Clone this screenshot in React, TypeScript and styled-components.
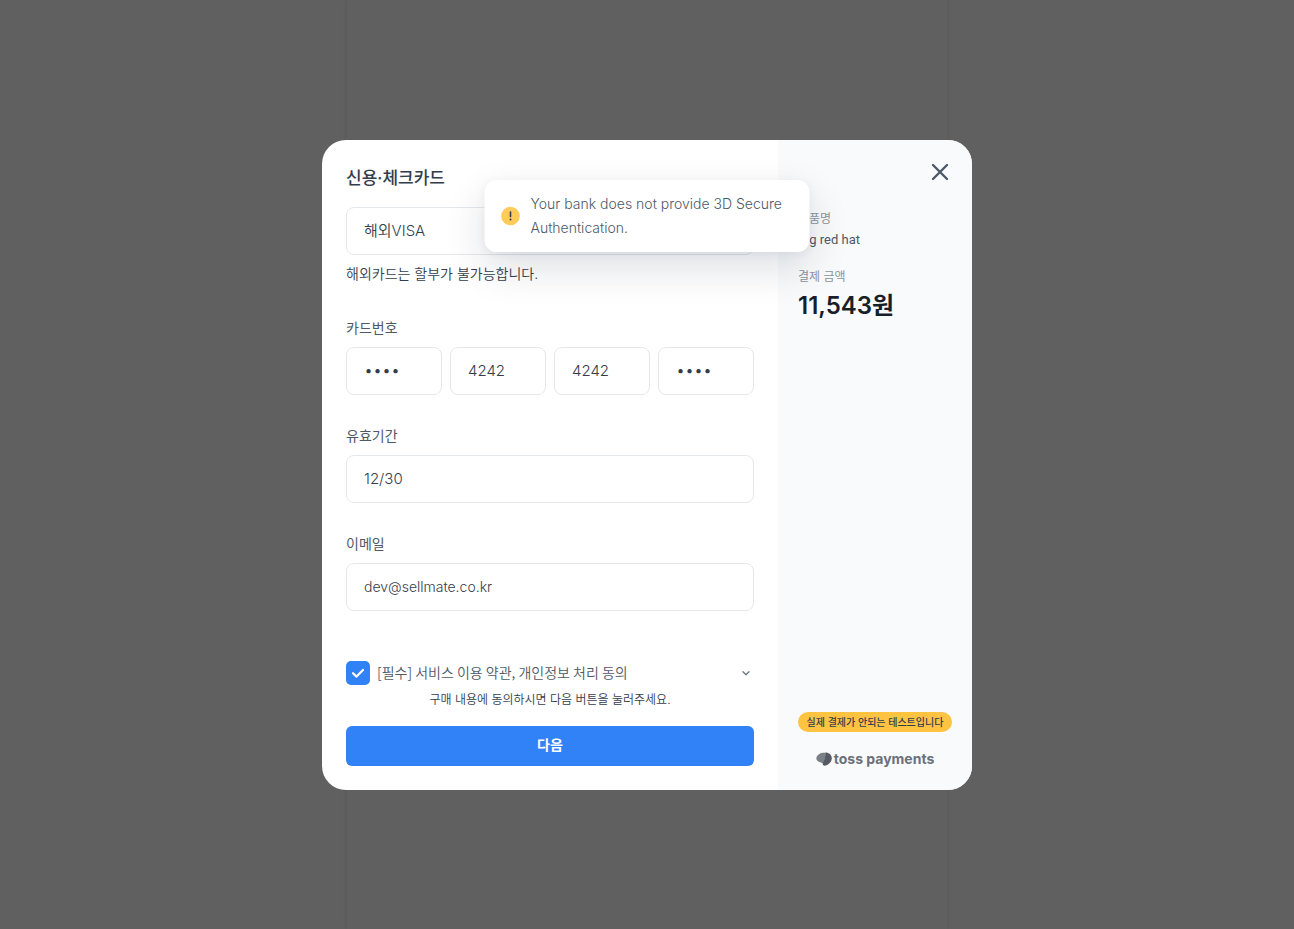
import React, { useState } from "react";
import styled, { createGlobalStyle } from "styled-components";

const GlobalStyle = createGlobalStyle`
  *, *::before, *::after { box-sizing: border-box; }
  body {
    margin: 0;
    background: #606060;
    color: #333d4b;
    font-family: Inter, "Noto Sans CJK KR", sans-serif;
  }
  button, input, select { font: inherit; color: inherit; margin: 0; }
  p, h1, dl, dd { margin: 0; }
`;

const Page = styled.div`
  min-height: 100vh;
  display: flex;
  justify-content: center;
`;

const Backdrop = styled.div`
  flex: 0 1 600px;
  min-width: 0;
  display: flex;
  align-items: center;
  justify-content: center;
  box-shadow: 0 0 4px rgba(0, 0, 0, 0.1);
`;

const Dialog = styled.main`
  position: relative;
  flex: none;
  width: 650px;
  max-width: 100vw;
  display: flex;
  border-radius: 24px;
  background: #fff;
`;

const FormPanel = styled.form`
  flex: 1;
  min-width: 0;
  padding: 24px;
`;

const Title = styled.h1`
  margin-bottom: 14px;
  font-size: 17px;
  font-weight: 500;
  line-height: 29px;
`;

const Fields = styled.div`
  display: flex;
  flex-direction: column;
  gap: 30px;
`;

const controlStyle = `
  display: block;
  width: 100%;
  min-width: 0;
  height: 48px;
  padding: 0 17px;
  border: 1px solid #e5e8eb;
  border-radius: 8px;
  outline: none;
  background: #fff;
  font-size: 15px;
  font-weight: 350;
`;

const CardSelect = styled.select`
  ${controlStyle}
  appearance: none;
`;

const TextField = styled.input`
  ${controlStyle}
  &[type="email"] { font-size: 14px; }
  &[type="password"] {
    padding-bottom: 2px;
    font-size: 16px;
  }
`;

const Hint = styled.p`
  margin: 8px 0 2px;
  font-size: 14px;
  font-weight: 350;
  line-height: 22px;
`;

const Label = styled.label`
  display: block;
  margin-bottom: 8px;
  color: #4e5968;
  font-size: 14px;
  line-height: 22px;
`;

const CardNumber = styled.div`
  display: grid;
  grid-template-columns: repeat(4, 1fr);
  gap: 8px;
`;

const Agreement = styled.div`
  display: flex;
  align-items: center;
  margin-top: 50px;
`;

const AgreementLabel = styled.label`
  flex: 1;
  display: flex;
  align-items: center;
  gap: 7px;
  color: #4e5968;
  font-family: "Noto Sans CJK KR", sans-serif;
  font-size: 14px;
  font-weight: 350;
`;

const AgreementText = styled.span`
  padding-bottom: 2px;
  line-height: 22px;
`;

const CheckFrame = styled.span`
  display: grid;
  width: 24px;
  height: 24px;
  > * { grid-area: 1 / 1; }
  > svg { pointer-events: none; }
`;

const Checkbox = styled.input`
  appearance: none;
  width: 24px;
  height: 24px;
  border-radius: 5px;
  background: #e5e8eb;
  &:checked { background: #3182f6; }
`;

const IconButton = styled.button`
  display: flex;
  padding: 0;
  border: 0;
  background: none;
  cursor: pointer;
`;

const Notice = styled.p`
  margin: 5px 0 16px;
  font-size: 12px;
  font-weight: 350;
  line-height: 20px;
  text-align: center;
`;

const NextButton = styled.button`
  display: block;
  width: 100%;
  height: 40px;
  padding: 0 0 4px;
  border: 0;
  border-radius: 6px;
  background: #3182f6;
  color: #fff;
  font-size: 14px;
  font-weight: 600;
  cursor: pointer;
`;

const Summary = styled.aside`
  flex: 0 0 194px;
  display: flex;
  flex-direction: column;
  padding: 20px 20px 22px;
  border-radius: 0 24px 24px 0;
  background: #f9fafb;
`;

const CloseButton = styled(IconButton)`
  align-self: flex-end;
  margin-bottom: 25px;
`;

const SummaryLabel = styled.dt`
  color: #8b95a1;
  font-size: 12px;
  line-height: 20px;
`;

const Product = styled.dd`
  margin-bottom: 16px;
  color: #4e5968;
  font-family: Roboto, "Noto Sans CJK KR", sans-serif;
  font-size: 13px;
  line-height: 22px;
`;

const Amount = styled.dd`
  color: #191f28;
  font-size: 24px;
  font-weight: 600;
  line-height: 38px;
`;

const TestBadge = styled.p`
  margin-top: auto;
  border-radius: 10px;
  background: #ffc342;
  font-size: 10px;
  font-weight: 500;
  line-height: 20px;
  text-align: center;
  white-space: nowrap;
`;

const Brand = styled.p`
  display: flex;
  align-items: center;
  justify-content: center;
  gap: 2px;
  margin-top: 18px;
  color: #6b7079;
  font-size: 14px;
  font-weight: 700;
  line-height: 18px;
  white-space: nowrap;
`;

const Toast = styled.div`
  position: absolute;
  top: 40px;
  left: 50%;
  width: 325px;
  transform: translateX(-50%);
  display: flex;
  align-items: center;
  gap: 10px;
  padding: 12px 16px;
  border-radius: 12px;
  background: #fff;
  box-shadow: 0 16px 40px rgba(0, 27, 55, 0.14), 0 2px 10px rgba(0, 27, 55, 0.05);
  color: #4e5968;
  font-size: 14px;
  font-weight: 350;
  line-height: 24px;
  > svg { flex: none; }
`;

function App() {
  const [agreed, setAgreed] = useState(true);
  return (
    <>
      <GlobalStyle />
      <Page>
        <Backdrop>
          <Dialog>
            <FormPanel onSubmit={(e: React.FormEvent) => e.preventDefault()}>
              <Title>신용·체크카드</Title>
              <Fields>
                <div>
                  <CardSelect aria-label="카드사" defaultValue="visa">
                    <option value="visa">해외VISA</option>
                  </CardSelect>
                  <Hint>해외카드는 할부가 불가능합니다.</Hint>
                </div>
                <div>
                  <Label htmlFor="card-1">카드번호</Label>
                  <CardNumber>
                    <TextField id="card-1" type="password" defaultValue="4242" maxLength={4} />
                    <TextField aria-label="카드번호 2" defaultValue="4242" maxLength={4} />
                    <TextField aria-label="카드번호 3" defaultValue="4242" maxLength={4} />
                    <TextField aria-label="카드번호 4" type="password" defaultValue="4242" maxLength={4} />
                  </CardNumber>
                </div>
                <div>
                  <Label htmlFor="expiry">유효기간</Label>
                  <TextField id="expiry" defaultValue="12/30" />
                </div>
                <div>
                  <Label htmlFor="email">이메일</Label>
                  <TextField id="email" type="email" defaultValue="dev@sellmate.co.kr" />
                </div>
              </Fields>
              <Agreement>
                <AgreementLabel>
                  <CheckFrame>
                    <Checkbox type="checkbox" checked={agreed} onChange={(e) => setAgreed(e.target.checked)} />
                    <svg width="24" height="24" viewBox="0 0 24 24" fill="none" stroke="#fff" strokeWidth="2.2" strokeLinecap="round" strokeLinejoin="round">
                      <path d="M7 12.2l3.5 3.4L17 9" />
                    </svg>
                  </CheckFrame>
                  <AgreementText>[필수] 서비스 이용 약관, 개인정보 처리 동의</AgreementText>
                </AgreementLabel>
                <IconButton type="button" aria-label="약관 펼치기">
                  <svg width="16" height="16" viewBox="0 0 16 16" fill="none" stroke="#6b7684" strokeWidth="1.3" strokeLinecap="round" strokeLinejoin="round">
                    <path d="M5 6.8l3 3 3-3" />
                  </svg>
                </IconButton>
              </Agreement>
              <Notice>구매 내용에 동의하시면 다음 버튼을 눌러주세요.</Notice>
              <NextButton type="submit">다음</NextButton>
            </FormPanel>
            <Summary>
              <CloseButton type="button" aria-label="닫기">
                <svg width="24" height="24" viewBox="0 0 24 24" fill="none" stroke="#4e5968" strokeWidth="2.4" strokeLinecap="round">
                  <path d="M5 5l14 14M19 5L5 19" />
                </svg>
              </CloseButton>
              <dl>
                <SummaryLabel>상품명</SummaryLabel>
                <Product>Big red hat</Product>
                <SummaryLabel>결제 금액</SummaryLabel>
                <Amount>11,543원</Amount>
              </dl>
              <TestBadge>실제 결제가 안되는 테스트입니다</TestBadge>
              <Brand>
                <svg width="16" height="16" viewBox="0 0 16 16">
                  <path d="M9.500 1.800C5 1.200 1 3.400.4 6.800c-.4 2.800 2.200 4.800 6.400 5.200C8.600 9 9.600 5.800 9.500 1.800z" fill="#7b7f87" />
                  <path d="M9.400 1.400c3.600 0 6.400 2.400 6.400 5.800-.2 3.600-3 6.900-7.200 7.500-1.200 0-2.300-1.400-2-2.700C8.400 9 9.500 5.800 9.400 1.400z" fill="#555a64" />
                </svg>
                toss payments
              </Brand>
            </Summary>
            <Toast role="alert">
              <svg width="20" height="20" viewBox="0 0 20 20">
                <circle cx="10" cy="10" r="9.300" fill="#ffcd57" />
                <path d="M10 6v4.600" stroke="#333d4b" strokeWidth="1.600" strokeLinecap="round" />
                <circle cx="10" cy="13.600" r="1" fill="#333d4b" />
              </svg>
              Your bank does not provide 3D Secure Authentication.
            </Toast>
          </Dialog>
        </Backdrop>
      </Page>
    </>
  );
}

export default App;
